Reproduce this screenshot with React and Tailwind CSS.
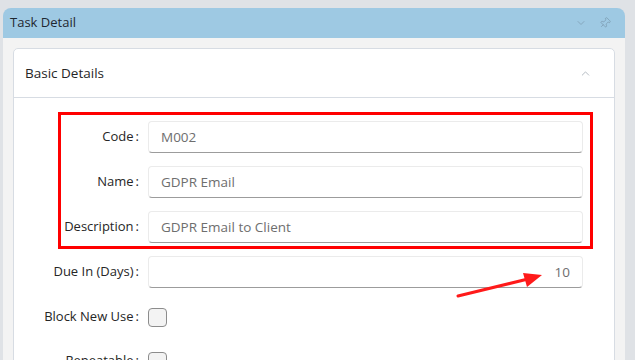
import React from 'react'
import { ChevronDown, ChevronUp, Pin } from 'lucide-react'

const font = { fontFamily: '"Segoe UI", "Open Sans", "Noto Sans", sans-serif' }

function TextRow({ label, value, align = 'left' }) {
  return (
    <div className="flex items-center h-[32px] mb-[13px]">
      <div className="w-[125px] text-right text-[13px] text-[#262626] whitespace-nowrap">
        {label}
        <span className="ml-[2px]">:</span>
      </div>
      <div
        className={`ml-[9px] w-[435px] h-[32px] flex items-center px-[12px] rounded-[4px] border border-[#ebebeb] border-b-[#9c9c9c] text-[13.5px] text-[#6e6e6e] ${
          align === 'right' ? 'justify-end' : ''
        }`}
      >
        {value}
      </div>
    </div>
  )
}

function CheckRow({ label }) {
  return (
    <div className="flex items-center h-[32px] mb-[12px]">
      <div className="w-[125px] text-right text-[13px] text-[#262626] whitespace-nowrap">
        {label}
        <span className="ml-[2px]">:</span>
      </div>
      <div className="ml-[9px] w-[19px] h-[19px] rounded-[4px] border border-[#8c8c8c] bg-[#f3f3f3]" />
    </div>
  )
}

export default function App() {
  return (
    <div className="relative w-full h-[360px] overflow-hidden bg-[#dfe2e6] pl-[3px] pr-[10px] pt-[8px]" style={font}>
      <div className="rounded-t-[8px] overflow-hidden">
        <div className="h-[30px] bg-[#9ec9e3] flex items-center pl-[7px] pr-[14px]">
          <span className="text-[13px] text-[#1e2730]">Task Detail</span>
          <div className="ml-auto flex items-center gap-[12px] text-[#7d9cb2]">
            <ChevronDown size={12} strokeWidth={1.5} />
            <Pin size={12} strokeWidth={1.5} className="rotate-45" />
          </div>
        </div>
        <div className="bg-[#f3f3f3] px-[10px] pt-[10px] h-[330px]">
          <div className="bg-white border border-[#d7dce3] rounded-[5px] h-[340px]">
            <div className="h-[49px] flex items-center pl-[11px] pr-[22px] border-b border-[#d7dce3]">
              <span className="text-[13.5px] text-[#262626]">Basic Details</span>
              <ChevronUp size={13} strokeWidth={1.5} className="ml-auto text-[#a4acb5]" />
            </div>
            <div className="pt-[23px]">
              <TextRow label="Code" value="M002" />
              <TextRow label="Name" value="GDPR Email" />
              <TextRow label="Description" value="GDPR Email to Client" />
              <TextRow label="Due In (Days)" value="10" align="right" />
              <CheckRow label="Block New Use" />
              <CheckRow label="Repeatable" />
            </div>
          </div>
        </div>
      </div>

      <div className="absolute left-[58px] top-[112px] w-[535px] h-[137px] border-[3px] border-[#ff0000]" />
      <svg className="absolute left-0 top-0" width="635" height="360" viewBox="0 0 635 360">
        <line x1="458" y1="296" x2="528" y2="279" stroke="#ff1a1a" strokeWidth="3" strokeLinecap="round" />
        <polygon points="542,275 523,273 527,287" fill="#ff1a1a" />
      </svg>
    </div>
  )
}
